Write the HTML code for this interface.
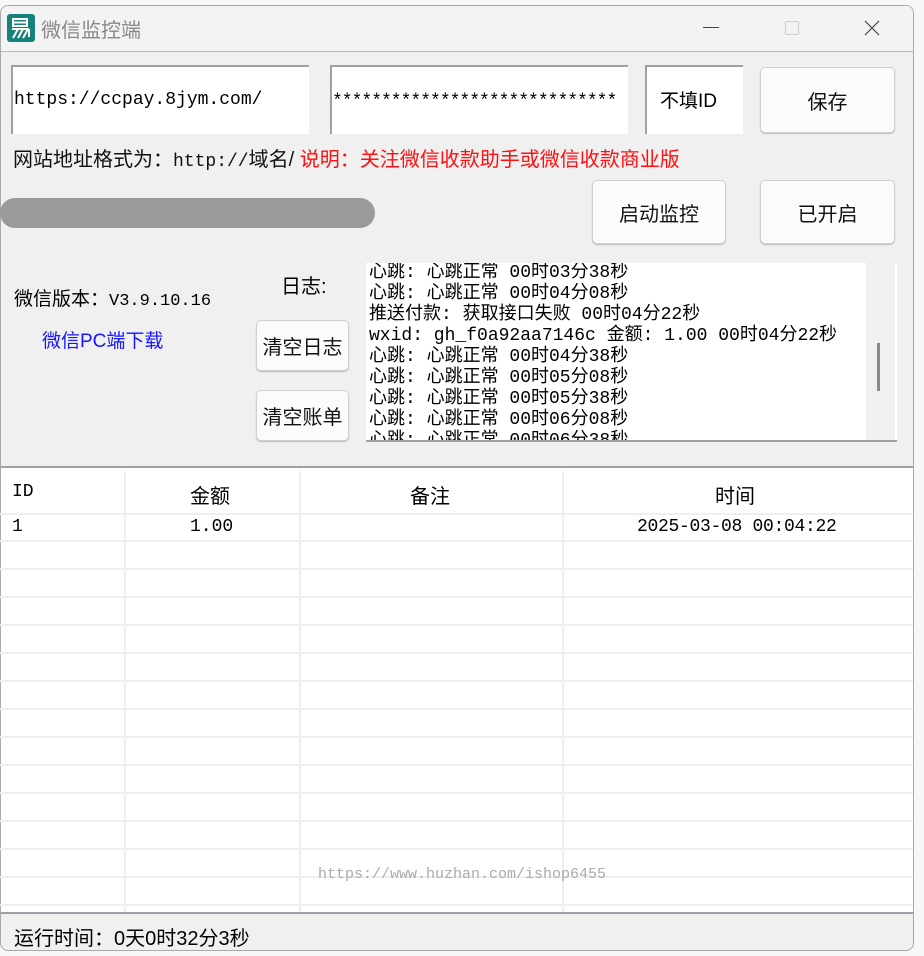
<!DOCTYPE html>
<html><head><meta charset="utf-8"><style>
*{margin:0;padding:0;box-sizing:border-box}
body{width:924px;height:956px;background:#f7f7f7;position:relative;overflow:hidden;font-family:"Liberation Sans","Noto Sans CJK SC",sans-serif}
.a{position:absolute}
.win{left:0;top:5px;width:914px;height:946px;background:#f0f0f0;border:1px solid #a9a9a9;border-radius:8px;overflow:hidden}
.mono{font-family:"Liberation Mono","Noto Sans CJK SC",monospace}
.tb{background:#fff;border-top:2px solid #a0a0a0;border-left:2px solid #a0a0a0}
.btn{background:#fbfbfb;border:1px solid #d0d0d0;border-radius:5px;box-shadow:0 1px 1px #bbb;font-size:20px;color:#111;display:flex;align-items:center;justify-content:center}
.hl{left:0;width:913px;height:2px;background:#efefef}
.vl{width:2px;background:#efefef}
.log div{height:21px;line-height:21px;font-size:18px;white-space:nowrap;font-family:"Liberation Mono","Noto Sans CJK SC",monospace}
</style></head><body>
<div class="a win">
 <div class="a" style="left:0;top:0;width:914px;height:46px;background:#f3f3f3;border-bottom:1px solid #b8b8b8"></div>
</div>
<!-- title -->
<div class="a" style="left:7px;top:14px;width:28px;height:28px;background:#16837a;border-radius:3px"></div>
<svg class="a" style="left:7px;top:14px" width="28" height="28"><path d="M6 5h14v7H6zM6 8.5h14M5 15h17M11 15l-5 9M16 15l-5 9M21 15l-5 9M22 15v8" stroke="#fff" stroke-width="2" fill="none"/></svg>
<div class="a" style="left:41px;top:14px;font-size:20px;color:#888">微信监控端</div>
<div class="a" style="left:703px;top:27px;width:16px;height:1px;background:#444"></div>
<div class="a" style="left:785px;top:21px;width:14px;height:14px;border:1px solid #ccc;border-radius:2px"></div>
<svg class="a" style="left:864px;top:20px" width="16" height="16"><path d="M1 1L15 15M15 1L1 15" stroke="#444" stroke-width="1.2"/></svg>
<!-- inputs -->
<div class="a tb mono" style="left:11px;top:65px;width:298px;height:69px;font-size:18px;line-height:67px;padding-left:1px">https://ccpay.8jym.com/</div>
<div class="a tb mono" style="left:330px;top:65px;width:298px;height:69px;font-size:18px;line-height:70px;overflow:hidden;white-space:nowrap;letter-spacing:-1px">*****************************</div>
<div class="a tb" style="left:645px;top:65px;width:98px;height:69px;font-size:19px;line-height:70px;padding-left:13px">不填ID</div>
<div class="a btn" style="left:760px;top:67px;width:135px;height:66px">保存</div>
<div class="a" style="left:13px;top:143px;font-size:20px;color:#111;white-space:nowrap">网站地址格式为：<span class="mono" style="font-size:18px">http://</span>域名/ <span style="color:#ff1010">说明：关注微信收款助手或微信收款商业版</span></div>
<div class="a" style="left:0;top:198px;width:375px;height:30px;background:#9a9a9a;border-radius:15px"></div>
<div class="a btn" style="left:592px;top:180px;width:134px;height:64px">启动监控</div>
<div class="a btn" style="left:760px;top:180px;width:135px;height:64px">已开启</div>
<div class="a" style="left:14px;top:284px;font-size:19px;white-space:nowrap">微信版本：<span class="mono" style="font-size:17px">V3.9.10.16</span></div>
<div class="a" style="left:42px;top:326px;font-size:19px;color:#1515ff">微信PC端下载</div>
<div class="a" style="left:281px;top:270px;font-size:20px">日志:</div>
<div class="a btn" style="left:256px;top:320px;width:93px;height:51px">清空日志</div>
<div class="a btn" style="left:256px;top:390px;width:93px;height:51px">清空账单</div>
<div class="a log" style="left:366px;top:263px;width:531px;height:179px;background:#fff;border-bottom:2px solid #a0a0a0;overflow:hidden;padding-left:3px;padding-top:0px">
 <div>心跳: 心跳正常 00时03分38秒</div><div>心跳: 心跳正常 00时04分08秒</div><div>推送付款: 获取接口失败 00时04分22秒</div><div>wxid: gh_f0a92aa7146c 金额: 1.00 00时04分22秒</div><div>心跳: 心跳正常 00时04分38秒</div><div>心跳: 心跳正常 00时05分08秒</div><div>心跳: 心跳正常 00时05分38秒</div><div>心跳: 心跳正常 00时06分08秒</div><div>心跳: 心跳正常 00时06分38秒</div>
 <div class="a" style="left:500px;top:0;width:29px;height:177px;background:#f0f0f0"></div>
 <div class="a" style="left:511px;top:80px;width:3px;height:48px;background:#888"></div>
</div>
<!-- table -->
<div class="a" style="left:1px;top:466px;width:912px;height:448px;background:#fff;border-top:2px solid #a0a0a8;border-bottom:2px solid #a0a0a8"></div>
<div class="a vl" style="left:124px;top:471px;height:441px"></div>
<div class="a vl" style="left:299px;top:471px;height:441px"></div>
<div class="a vl" style="left:562px;top:471px;height:441px"></div>
<div class="a hl" style="top:513px"></div>
<div class="a hl" style="top:540px"></div><div class="a hl" style="top:568px"></div><div class="a hl" style="top:596px"></div><div class="a hl" style="top:624px"></div><div class="a hl" style="top:652px"></div><div class="a hl" style="top:680px"></div><div class="a hl" style="top:708px"></div><div class="a hl" style="top:736px"></div><div class="a hl" style="top:764px"></div><div class="a hl" style="top:792px"></div><div class="a hl" style="top:820px"></div><div class="a hl" style="top:848px"></div><div class="a hl" style="top:876px"></div><div class="a hl" style="top:904px"></div>
<div class="a mono" style="left:12px;top:482px;font-size:18px">ID</div>
<div class="a" style="left:190px;top:480px;font-size:20px">金额</div>
<div class="a" style="left:410px;top:480px;font-size:20px">备注</div>
<div class="a" style="left:715px;top:480px;font-size:20px">时间</div>
<div class="a mono" style="left:12px;top:517px;font-size:18px">1</div>
<div class="a mono" style="left:190px;top:517px;font-size:18px">1.00</div>
<div class="a mono" style="left:637px;top:517px;font-size:18px;letter-spacing:-0.3px">2025-03-08 00:04:22</div>
<div class="a mono" style="left:318px;top:866px;font-size:15px;color:#aaa">https://www.huzhan.com/ishop6455</div>
<div class="a" style="left:14px;top:922px;font-size:20px;white-space:nowrap">运行时间：0天0时32分3秒</div>
</body></html>
